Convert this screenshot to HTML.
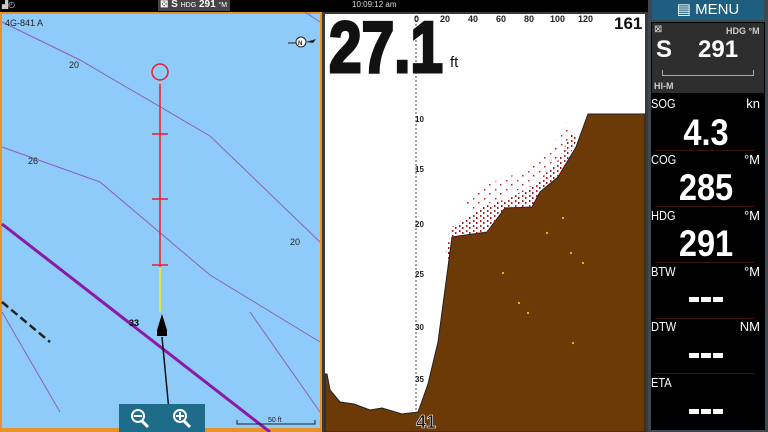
<!DOCTYPE html>
<html><head><meta charset="utf-8"><style>
*{margin:0;padding:0;box-sizing:border-box}
body{width:768px;height:432px;overflow:hidden;background:#000;font-family:"Liberation Sans",sans-serif;position:relative}
.a{position:absolute}
.lbl{position:absolute;left:651px;color:#fff;font-size:13px;transform:scaleX(.85);transform-origin:left}
.unit{position:absolute;right:8px;color:#fff;font-size:13px}
.val{position:absolute;left:648px;width:116px;text-align:center;color:#fff;font-weight:bold;font-size:37px;line-height:40px;transform:scaleX(.88)}
.sep{position:absolute;left:655px;width:100px;height:1px;background:#3a1010}
.dash{position:absolute;left:689px;width:34px;height:5px;background:linear-gradient(90deg,#fff 0 10px,transparent 10px 12px,#fff 12px 22px,transparent 22px 24px,#fff 24px)}
</style></head><body>
<div class="a" style="left:158px;top:0;width:72px;height:11px;background:#444"></div>
<div class="a" style="left:160px;top:-1px;color:#fff;font-size:10px;font-weight:bold;white-space:nowrap">⊠ S <span style="font-size:7px;font-weight:normal">HDG</span> 291 <span style="font-size:7px;font-weight:normal">°M</span></div>
<div class="a" style="left:352px;top:0;color:#ddd;font-size:8px">10:09:12 am</div>
<div class="a" style="left:2px;top:0;color:#ccc;font-size:8px">▟◴</div>

<svg class="a" style="left:0;top:12px" width="323" height="420">
<rect x="0" y="0" width="323" height="420" fill="#e8922a"/>
<rect x="2" y="2" width="318" height="414" fill="#8fcbf8"/>
<g fill="none" stroke="#8a5ec8" stroke-width="1">
<polyline points="2,10 80,48 210,124 320,230"/>
<polyline points="2,135 100,170 210,263 320,330"/>
<polyline points="305,0 320,10"/>
<polyline points="250,300 320,400"/>
<polyline points="2,300 60,400"/>
</g>
<line x1="2" y1="212" x2="270" y2="420" stroke="#8a18a8" stroke-width="3"/>
<line x1="2" y1="290" x2="50" y2="330" stroke="#222" stroke-width="2.5" stroke-dasharray="8,4"/>
<line x1="160" y1="72" x2="160" y2="255" stroke="#e02030" stroke-width="1.5"/>
<line x1="160" y1="255" x2="160" y2="300" stroke="#f0f020" stroke-width="1.5"/>
<g stroke="#e02030" stroke-width="1.5"><line x1="152" y1="122" x2="168" y2="122"/><line x1="152" y1="187" x2="168" y2="187"/><line x1="152" y1="253" x2="168" y2="253"/></g>
<circle cx="160" cy="60" r="8" fill="none" stroke="#e02030" stroke-width="1.5"/>
<line x1="162" y1="325" x2="171" y2="420" stroke="#111" stroke-width="1.5"/>
<path d="M162,302 L167,318 L167,324 L157,324 L157,318 Z" fill="#000"/>
<rect x="119" y="392" width="86" height="28" fill="#1f6c8a"/>
<circle cx="138" cy="404" r="6" fill="none" stroke="#fff" stroke-width="2"/><line x1="134" y1="404" x2="142" y2="404" stroke="#fff" stroke-width="2"/><line x1="142" y1="409" x2="148" y2="415" stroke="#fff" stroke-width="3"/>
<circle cx="180" cy="404" r="6" fill="none" stroke="#fff" stroke-width="2"/><line x1="176" y1="404" x2="184" y2="404" stroke="#fff" stroke-width="2"/><line x1="180" y1="400" x2="180" y2="408" stroke="#fff" stroke-width="2"/><line x1="184" y1="409" x2="190" y2="415" stroke="#fff" stroke-width="3"/>
<polyline points="237,408 237,412 315,412 315,408" fill="none" stroke="#222"/>
<circle cx="301" cy="30" r="5" fill="#fff" stroke="#222"/>
<line x1="288" y1="31" x2="296" y2="31" stroke="#222"/><path d="M306,30 L316,27 L313,31 Z" fill="#222"/>
<g font-family="Liberation Sans" font-size="9" fill="#222">
<text x="5" y="14">4G-841 A</text><text x="69" y="56">20</text><text x="28" y="152">26</text><text x="290" y="233">20</text>
<text x="129" y="314" font-weight="bold" fill="#000">33</text><text x="268" y="410" font-size="7">50 ft</text><text x="298" y="33" font-size="6" font-weight="bold">N</text>
</g>
</svg>

<svg class="a" style="left:322px;top:12px" width="326" height="420">
<defs>
<pattern id="dots" width="7" height="5" patternUnits="userSpaceOnUse">
<rect x="0" y="0" width="1.5" height="2" fill="#a01818"/><rect x="4" y="3" width="1.5" height="2" fill="#b02020"/>
</pattern>
<pattern id="dots2" width="11" height="9" patternUnits="userSpaceOnUse">
<rect x="2" y="1" width="1.5" height="1.5" fill="#b02020"/><rect x="8" y="6" width="1.5" height="1.5" fill="#c03030"/>
</pattern>
</defs>
<rect x="0" y="0" width="326" height="420" fill="#3a3a3a"/>
<rect x="3" y="2" width="320" height="418" fill="#fff"/>
<path d="M323,102 L266,102 L254,135 L236,165 L218,180 L210,195 L183,196 L165,220 L130,225 L124,270 L116,330 L106,372 L96,400 L80,402 L60,396 L48,398 L32,392 L18,390 L8,378 L5,362 L3,362 L3,420 L323,420 Z" fill="#6c3a06" stroke="#222" stroke-width="1"/>
<polygon points="124,240 130,215 160,195 190,185 215,170 235,150 250,120 256,125 240,160 218,182 210,198 183,198 165,222 130,228 126,250" fill="url(#dots)"/>
<polygon points="140,190 170,170 200,160 230,135 245,110 250,120 235,150 210,172 180,185 150,200" fill="url(#dots2)"/>
<g fill="#b8c828"><rect x="248" y="240" width="2" height="2"/><rect x="260" y="250" width="2" height="2"/><rect x="196" y="290" width="2" height="2"/><rect x="205" y="300" width="2" height="2"/><rect x="250" y="330" width="2" height="2"/><rect x="180" y="260" width="2" height="2"/><rect x="224" y="220" width="2" height="2"/><rect x="240" y="205" width="2" height="2"/></g>
<line x1="94" y1="0" x2="94" y2="420" stroke="#444" stroke-dasharray="2,2"/>
<g font-family="Liberation Sans" font-size="9" font-weight="bold" fill="#222">
<text x="92" y="10">0</text><text x="118" y="10">20</text><text x="146" y="10">40</text><text x="174" y="10">60</text><text x="202" y="10">80</text><text x="228" y="10">100</text><text x="256" y="10">120</text>
<text x="95" y="58" font-size="8">5</text><text x="93" y="110" font-size="8">10</text><text x="93" y="160" font-size="8">15</text><text x="93" y="215" font-size="8">20</text><text x="93" y="265" font-size="8">25</text><text x="93" y="318" font-size="8">30</text><text x="93" y="370" font-size="8">35</text>
</g>
<text x="292" y="17" font-family="Liberation Sans" font-size="17" font-weight="bold" fill="#111">161</text>
<text x="7" y="60" font-family="Liberation Sans" font-size="72" font-weight="bold" fill="#111" stroke="#111" stroke-width="3" textLength="114" lengthAdjust="spacingAndGlyphs">27.1</text>
<text x="128" y="55" font-family="Liberation Sans" font-size="15" fill="#111">ft</text>
<text x="94" y="416" font-family="Liberation Sans" font-size="18" font-weight="bold" fill="#111" stroke="#fff" stroke-width=".6">41</text>
</svg>

<div class="a" style="left:648px;top:0;width:120px;height:432px;background:#3e4850"></div>
<div class="a" style="left:651px;top:22px;width:114px;height:408px;background:#000"></div>
<div class="a" style="left:652px;top:0;width:112px;height:20px;background:#1e5e7e;color:#fff;font-size:15px;line-height:20px;text-align:center">▤ MENU</div>
<div class="a" style="left:652px;top:23px;width:112px;height:70px;background:#2e2e2e"></div>
<div class="a" style="left:654px;top:24px;color:#ddd;font-size:10px">⊠</div>
<div class="a" style="left:726px;top:26px;color:#ccc;font-size:9px;font-weight:bold">HDG °M</div>
<div class="a" style="left:656px;top:36px;color:#fff;font-size:24px;font-weight:bold">S</div>
<div class="a" style="left:698px;top:36px;color:#fff;font-size:24px;font-weight:bold">291</div>
<div class="a" style="left:662px;top:70px;width:92px;height:6px;border:1px solid #aaa;border-top:none"></div>
<div class="a" style="left:654px;top:81px;color:#ccc;font-size:9px;font-weight:bold">HI-M</div>
<div class="lbl" style="top:96px">SOG</div><div class="unit" style="top:96px">kn</div><div class="val" style="top:113px">4.3</div>
<div class="sep" style="top:150px"></div>
<div class="lbl" style="top:152px">COG</div><div class="unit" style="top:152px">°M</div><div class="val" style="top:168px">285</div>
<div class="sep" style="top:206px"></div>
<div class="lbl" style="top:208px">HDG</div><div class="unit" style="top:208px">°M</div><div class="val" style="top:224px">291</div>
<div class="sep" style="top:262px"></div>
<div class="lbl" style="top:264px">BTW</div><div class="unit" style="top:264px">°M</div><div class="dash" style="top:297px"></div>
<div class="sep" style="top:318px"></div>
<div class="lbl" style="top:319px">DTW</div><div class="unit" style="top:319px">NM</div><div class="dash" style="top:353px"></div>
<div class="sep" style="top:373px"></div>
<div class="lbl" style="top:375px">ETA</div><div class="dash" style="top:409px"></div>
</body></html>
